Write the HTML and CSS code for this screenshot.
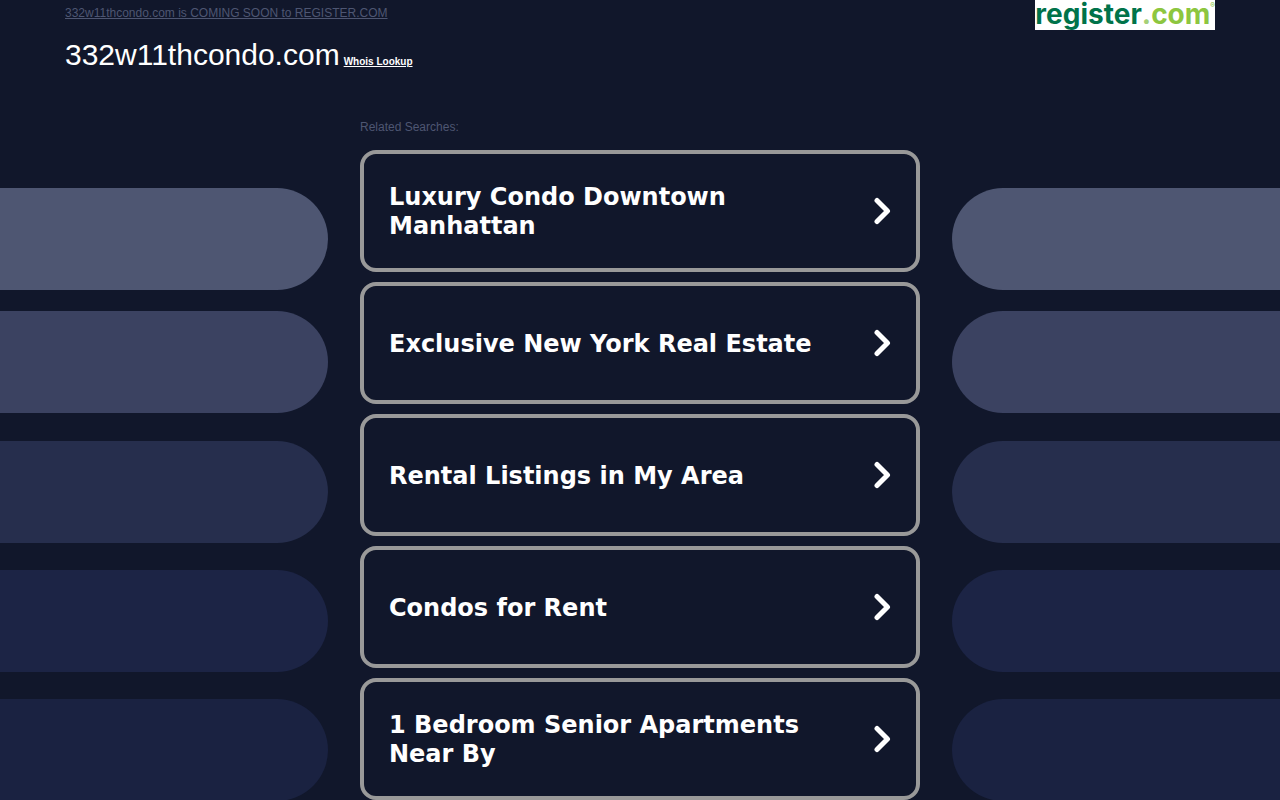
FILE: index.html
```html
<!DOCTYPE html>
<html lang="en">
<head>
<meta charset="utf-8">
<meta name="viewport" content="width=device-width, initial-scale=1">
<title>332w11thcondo.com</title>
<link rel="stylesheet" href="styles.css">
</head>
<body>
<header class="header">
  <div class="intro">
    <a class="notice" href="#">332w11thcondo.com is COMING SOON to REGISTER.COM</a>
    <div class="title">
      <h1 class="domain">332w11thcondo.com</h1>
      <a class="whois" href="#">Whois Lookup</a>
    </div>
  </div>
  <a class="logo" href="#"><span>register</span><span class="logo-dot">.</span><span class="logo-com">com</span><span class="logo-mark">®</span></a>
</header>
<main class="main">
  <div class="pills pills-left" aria-hidden="true">
    <div class="pill pill-1"></div>
    <div class="pill pill-2"></div>
    <div class="pill pill-3"></div>
    <div class="pill pill-4"></div>
    <div class="pill pill-5"></div>
  </div>
  <section class="searches">
    <h2 class="label">Related Searches:</h2>
    <nav class="cards">
      <a class="card" href="#"><span class="card-text">Luxury Condo Downtown Manhattan</span><svg class="arrow" viewBox="0 0 18 28"><path d="M3 3.500 13.500 14 3 24.500"/></svg></a>
      <a class="card" href="#"><span class="card-text">Exclusive New York Real Estate</span><svg class="arrow" viewBox="0 0 18 28"><path d="M3 3.500 13.500 14 3 24.500"/></svg></a>
      <a class="card" href="#"><span class="card-text">Rental Listings in My Area</span><svg class="arrow" viewBox="0 0 18 28"><path d="M3 3.500 13.500 14 3 24.500"/></svg></a>
      <a class="card" href="#"><span class="card-text">Condos for Rent</span><svg class="arrow" viewBox="0 0 18 28"><path d="M3 3.500 13.500 14 3 24.500"/></svg></a>
      <a class="card" href="#"><span class="card-text">1 Bedroom Senior Apartments Near By</span><svg class="arrow" viewBox="0 0 18 28"><path d="M3 3.500 13.500 14 3 24.500"/></svg></a>
    </nav>
  </section>
  <div class="pills pills-right" aria-hidden="true">
    <div class="pill pill-1"></div>
    <div class="pill pill-2"></div>
    <div class="pill pill-3"></div>
    <div class="pill pill-4"></div>
    <div class="pill pill-5"></div>
  </div>
</main>
</body>
</html>
```

FILE: styles.css
```css
* {
  box-sizing: border-box;
}

body {
  margin: 0;
  background: #11172b;
  color: #fff;
  font-family: "Liberation Sans", Arial, sans-serif;
  overflow-x: hidden;
}

a {
  color: inherit;
}

/* Header */
.header {
  display: flex;
  justify-content: space-between;
  align-items: flex-start;
  max-width: 1150px;
  margin: 0 auto;
}

.intro {
  padding-top: 6px;
}

.notice {
  display: block;
  font-size: 12px;
  line-height: 14px;
  color: #4e5672;
}

.title {
  display: flex;
  align-items: baseline;
  gap: 4px;
  padding-top: 18px;
}

.domain {
  margin: 0;
  font-size: 30px;
  line-height: 34px;
  font-weight: 400;
}

.whois {
  font-size: 10px;
  font-weight: 700;
}

.logo {
  display: flex;
  background: #fff;
  color: #00734a;
  font-family: Inter, sans-serif;
  font-size: 28px;
  font-weight: 700;
  line-height: 28px;
  padding-bottom: 2px;
  text-decoration: none;
}

.logo-dot {
  color: #a5d077;
}

.logo-com {
  color: #8dc63f;
}

.logo-mark {
  color: #8dc63f;
  font-size: 7px;
  line-height: 12px;
}

/* Searches between two columns of pills */
.main {
  display: grid;
  grid-template-columns: 1fr minmax(0, 560px) 1fr;
  column-gap: 32px;
  padding-top: 48px;
}

.label {
  margin: 0 0 16px;
  font-size: 12px;
  line-height: 14px;
  font-weight: 400;
  color: #4e5672;
}

.cards {
  display: flex;
  flex-direction: column;
  gap: 10px;
}

.card {
  display: flex;
  align-items: center;
  justify-content: space-between;
  gap: 24px;
  min-height: 122px;
  padding: 4px 24px 4px 25px;
  border: 4px solid #999;
  border-radius: 16px;
  font-family: "DejaVu Sans", Verdana, sans-serif;
  font-size: 24px;
  line-height: 29px;
  font-weight: 700;
  text-decoration: none;
}

.card-text {
  padding-top: 2px;
}

.arrow {
  flex: none;
  width: 18px;
  height: 28px;
  fill: none;
  stroke: #fff;
  stroke-width: 5;
  stroke-linecap: round;
  stroke-linejoin: round;
}

.pills {
  display: flex;
  flex-direction: column;
  gap: 27px;
  height: 0;
  min-height: 100%;
  padding-top: 68px;
  overflow: hidden;
}

.pill {
  flex: none;
  height: 102px;
}

.pills-left .pill {
  border-radius: 0 51px 51px 0;
}

.pills-right .pill {
  border-radius: 51px 0 0 51px;
}

.pill-1 {
  background: #4e5672;
  margin-bottom: -6px;
}

.pill-2 {
  background: #3b4261;
  margin-bottom: 1px;
}

.pill-3 {
  background: #262e4d;
}

.pill-4 {
  background: #1c2445;
}

.pill-5 {
  background: #1a2241;
}
```
